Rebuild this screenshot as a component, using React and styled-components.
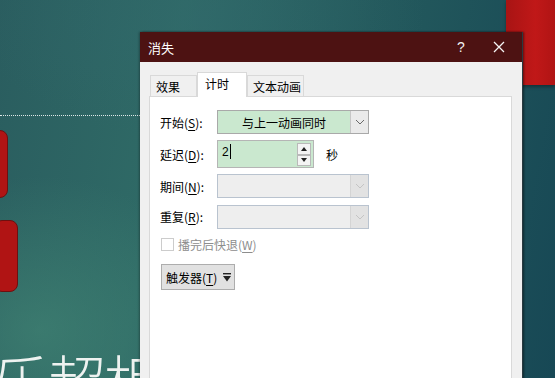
import React from 'react';
import styled, { createGlobalStyle } from 'styled-components';

const GlobalStyle = createGlobalStyle`
  html, body {
    margin: 0;
    padding: 0;
    width: 555px;
    height: 378px;
    overflow: hidden;
  }
  body {
    font-family: 'Noto Sans CJK SC', 'Noto Sans', sans-serif;
  }
`;

const Desktop = styled.div`
  position: relative;
  width: 555px;
  height: 378px;
  overflow: hidden;
  background:
    radial-gradient(ellipse 260px 220px at 40px 330px, rgba(70, 140, 120, 0.55), transparent 70%),
    radial-gradient(ellipse 300px 160px at 200px 20px, rgba(50, 105, 110, 0.45), transparent 75%),
    linear-gradient(100deg, #2a5d5f 0%, #2f6a66 30%, #245a5d 60%, #174855 100%);
`;

const DottedLine = styled.div`
  position: absolute;
  left: 0;
  top: 115px;
  width: 140px;
  border-top: 1px dotted rgba(255, 255, 255, 0.85);
`;

const RedShape = styled.div`
  position: absolute;
  background: #b01414;
  border: 1px solid #6e1010;
  border-radius: 8px;
  left: ${({ $left }) => $left}px;
  top: ${({ $top }) => $top}px;
  width: ${({ $w }) => $w}px;
  height: ${({ $h }) => $h}px;
`;

const RedCorner = styled.div`
  position: absolute;
  right: 0;
  top: 0;
  width: 49px;
  height: 85px;
  background: linear-gradient(90deg, #a81414, #c01818 60%, #b01414);
  box-shadow: 0 2px 3px rgba(0, 0, 0, 0.35);
`;

const BigText = styled.div`
  position: absolute;
  left: -8px;
  top: 344px;
  font-size: 58px;
  font-weight: 300;
  line-height: 70px;
  color: #eef2f0;
  letter-spacing: -2px;
  white-space: nowrap;
`;

const Dialog = styled.div`
  position: absolute;
  left: 140px;
  top: 32px;
  width: 382px;
  height: 360px;
  background: #f0f0f0;
  display: flex;
  flex-direction: column;
  box-shadow: 1px 0 0 #2a3a40, 2px 0 2px rgba(0, 0, 0, 0.45), -1px 0 2px rgba(0, 0, 0, 0.3);
`;

const TitleBar = styled.div`
  height: 30px;
  background: #4d1212;
  display: flex;
  align-items: center;
  color: #ffffff;
  font-size: 13px;
  padding-left: 8px;
`;

const Title = styled.span`
  flex: 1;
`;

const TitleButton = styled.span`
  width: ${({ $w }) => $w}px;
  display: flex;
  justify-content: center;
  align-items: center;
  color: #f2f2f2;
  font-family: 'Liberation Sans', sans-serif;
  font-size: 14px;
`;

const Body = styled.div`
  flex: 1;
  padding: 10px 10px 0 9px;
  display: flex;
  flex-direction: column;
`;

const TabRow = styled.div`
  display: flex;
  align-items: flex-end;
  height: 25px;
  margin-bottom: -1px;
  position: relative;
  z-index: 1;
  padding-left: 1px;
`;

const Tab = styled.div`
  width: ${({ $w }) => $w}px;
  height: ${({ $active }) => ($active ? 25 : 22)}px;
  padding-left: ${({ $active }) => ($active ? 7 : 5)}px;
  box-sizing: border-box;
  display: flex;
  align-items: center;
  font-size: 12px;
  color: #000;
  background: ${({ $active }) => ($active ? '#ffffff' : '#f0f0f0')};
  border: 1px solid #d9d9d9;
  border-bottom: ${({ $active }) => ($active ? 'none' : '1px solid #d9d9d9')};
  padding-bottom: ${({ $active }) => ($active ? 3 : 0)}px;
  position: relative;
  z-index: ${({ $active }) => ($active ? 2 : 1)};
`;

const Panel = styled.div`
  flex: 1;
  background: #ffffff;
  border: 1px solid #d9d9d9;
  padding: 13px 10px 0 10px;
  display: flex;
  flex-direction: column;
`;

const Row = styled.div`
  display: flex;
  align-items: center;
  height: ${({ $h }) => $h}px;
  margin-bottom: ${({ $mb }) => $mb}px;
`;

const Label = styled.span`
  width: 57px;
  font-size: 12px;
  color: ${({ $disabled }) => ($disabled ? '#8d8d8d' : '#000')};
  white-space: nowrap;
  u {
    text-decoration: underline;
    text-underline-offset: 2px;
  }
`;

const Combo = styled.div`
  width: 152px;
  height: 24px;
  box-sizing: border-box;
  display: flex;
  border: 1px solid ${({ $disabled }) => ($disabled ? '#b9c3cf' : '#a9a9a9')};
  background: ${({ $disabled }) => ($disabled ? '#eeeeee' : '#cae8cf')};
`;

const ComboText = styled.span`
  flex: 1;
  display: flex;
  align-items: center;
  justify-content: center;
  font-size: 12px;
  color: #000;
`;

const DropButton = styled.span`
  width: 17px;
  display: flex;
  align-items: center;
  justify-content: center;
  background: ${({ $disabled }) => ($disabled ? '#e2e2e2' : '#eaeaea')};
  border-left: 1px solid ${({ $disabled }) => ($disabled ? '#d4d4d4' : '#c6c6c6')};
  color: ${({ $disabled }) => ($disabled ? '#c4c4c4' : '#6a6a6a')};
`;

const Spin = styled.div`
  width: 97px;
  height: 28px;
  box-sizing: border-box;
  border: 1px solid #b5b5b5;
  background: #cae8cf;
  display: flex;
  padding: 2px 2px 1px 4px;
`;

const SpinValue = styled.span`
  flex: 1;
  font-size: 12px;
  line-height: 16px;
  font-family: 'Liberation Sans', sans-serif;
  color: #000;
  display: flex;
  align-items: flex-start;
  padding-top: 1px;
`;

const Caret = styled.span`
  display: inline-block;
  width: 1px;
  height: 15px;
  background: #000;
  margin-left: 1px;
`;

const SpinButtons = styled.div`
  width: 14px;
  display: flex;
  flex-direction: column;
  justify-content: space-between;
`;

const SpinButton = styled.span`
  height: 10px;
  border: 1px solid #b9b9b9;
  background: #f4f4f4;
  display: flex;
  align-items: center;
  justify-content: center;
`;

const Unit = styled.span`
  font-size: 12px;
  margin-left: 12px;
  color: #000;
`;

const CheckBox = styled.span`
  width: 11px;
  height: 11px;
  border: 1px solid #cccccc;
  background: #ffffff;
  margin: 0 4px 0 1px;
`;

const TriggerButton = styled.div`
  width: 74px;
  height: 26px;
  box-sizing: border-box;
  margin-left: 1px;
  border: 1px solid #adadad;
  background: #e1e1e1;
  display: flex;
  align-items: center;
  padding-left: 4px;
  gap: 6px;
  font-size: 12px;
  color: #000;
  u {
    text-decoration: underline;
    text-underline-offset: 2px;
  }
`;

const Chevron = ({ color }) => (
  <svg width="10" height="6" viewBox="0 0 10 6">
    <path d="M1 1 L5 5 L9 1" fill="none" stroke={color} strokeWidth="1" />
  </svg>
);

const Triangle = ({ up }) => (
  <svg width="6" height="4" viewBox="0 0 6 4">
    <path d={up ? 'M0 4 L3 0 L6 4 Z' : 'M0 0 L3 4 L6 0 Z'} fill="#222" />
  </svg>
);

const DropMark = () => (
  <svg width="8" height="9" viewBox="0 0 8 9">
    <rect x="0" y="0" width="8" height="1.4" fill="#222" />
    <path d="M0 3 L8 3 L4 8.5 Z" fill="#222" />
  </svg>
);

const CloseIcon = () => (
  <svg width="12" height="12" viewBox="0 0 12 12">
    <path d="M1 1 L11 11 M11 1 L1 11" stroke="#f5f5f5" strokeWidth="1.3" />
  </svg>
);

export default function App() {
  return (
    <>
      <GlobalStyle />
      <Desktop>
        <DottedLine />
        <RedShape $left={-12} $top={130} $w={18} $h={66} />
        <RedShape $left={-6} $top={220} $w={22} $h={70} />
        <RedCorner />
        <BigText>乐超相</BigText>

        <Dialog>
          <TitleBar>
            <Title>消失</Title>
            <TitleButton $w={30}>?</TitleButton>
            <TitleButton $w={46}>
              <CloseIcon />
            </TitleButton>
          </TitleBar>
          <Body>
            <TabRow>
              <Tab $w={47}>效果</Tab>
              <Tab $w={50} $active>计时</Tab>
              <Tab $w={57}>文本动画</Tab>
            </TabRow>
            <Panel>
              <Row $h={24} $mb={6}>
                <Label>
                  开始(<u>S</u>):
                </Label>
                <Combo>
                  <ComboText>与上一动画同时</ComboText>
                  <DropButton>
                    <Chevron color="#6a6a6a" />
                  </DropButton>
                </Combo>
              </Row>
              <Row $h={28} $mb={6}>
                <Label>
                  延迟(<u>D</u>):
                </Label>
                <Spin>
                  <SpinValue>
                    2<Caret />
                  </SpinValue>
                  <SpinButtons>
                    <SpinButton>
                      <Triangle up />
                    </SpinButton>
                    <SpinButton>
                      <Triangle />
                    </SpinButton>
                  </SpinButtons>
                </Spin>
                <Unit>秒</Unit>
              </Row>
              <Row $h={24} $mb={6}>
                <Label>
                  期间(<u>N</u>):
                </Label>
                <Combo $disabled>
                  <ComboText />
                  <DropButton $disabled>
                    <Chevron color="#c4c4c4" />
                  </DropButton>
                </Combo>
              </Row>
              <Row $h={25} $mb={9}>
                <Label>
                  重复(<u>R</u>):
                </Label>
                <Combo $disabled>
                  <ComboText />
                  <DropButton $disabled>
                    <Chevron color="#c4c4c4" />
                  </DropButton>
                </Combo>
              </Row>
              <Row $h={13} $mb={13}>
                <CheckBox />
                <Label $disabled>
                  播完后快退(<u>W</u>)
                </Label>
              </Row>
              <TriggerButton>
                <span>
                  触发器(<u>T</u>)
                </span>
                <DropMark />
              </TriggerButton>
            </Panel>
          </Body>
        </Dialog>
      </Desktop>
    </>
  );
}
